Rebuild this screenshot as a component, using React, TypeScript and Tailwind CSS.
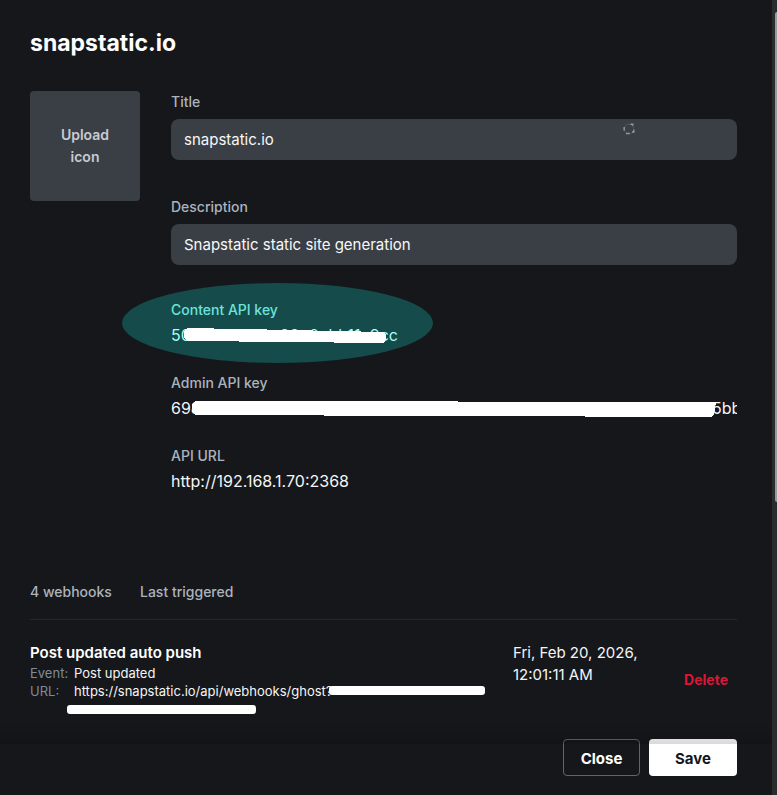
import { useState } from "react";

type FieldProps = { id: string; label: string; initial: string };

function TextField({ id, label, initial }: FieldProps) {
  const [value, setValue] = useState(initial);
  return (
    <div className="flex flex-col gap-1.5">
      <label htmlFor={id} className="text-sm leading-[22px] font-medium text-[#abb4be]">
        {label}
      </label>
      <input
        id={id}
        type="text"
        value={value}
        onChange={(e) => setValue(e.target.value)}
        className="h-[41px] w-full rounded-lg bg-[#3a3f46] px-[13px] text-[15px] text-[#f8f8f8] outline-none"
      />
    </div>
  );
}

function BusyMark() {
  return (
    <svg
      className="pointer-events-none absolute top-8 right-[102px] size-3"
      viewBox="0 0 12 12"
      fill="none"
      stroke="#92979d"
      strokeWidth="1.5"
      aria-hidden="true"
    >
      <circle cx="6" cy="6" r="4.8" stroke="#50565d" strokeWidth="1" />
      <path d="M7.5 1.2h2.3v1.6M10.8 6.8v2.2H9M3 10.6h3.8M1.2 4v3.5" />
    </svg>
  );
}

export default function App() {
  return (
    <div className="flex min-h-screen bg-[#16171b] font-['Inter','Liberation_Sans',sans-serif] text-[#f5f5f5]">
      <main className="flex min-h-screen min-w-0 flex-1 flex-col">
        <div className="flex flex-1 flex-col pt-[27px] pr-[35px] pl-[30px]">
          <h1 className="text-[23px] leading-8 font-bold text-white">snapstatic.io</h1>

          <section className="mt-8 flex items-start gap-[31px]">
            <button
              type="button"
              className="size-[110px] shrink-0 rounded bg-[#3a3f46] px-6 text-sm leading-[22px] font-semibold text-[#c8cbcf]"
            >
              Upload icon
            </button>

            <div className="min-w-0 flex-1">
              <div className="relative">
                <TextField id="title" label="Title" initial="snapstatic.io" />
                <BusyMark />
              </div>
              <div className="mt-9">
                <TextField id="description" label="Description" initial="Snapstatic static site generation" />
              </div>

              <dl className="mt-[34px] flex flex-col gap-[26px]">
                <div className="relative isolate">
                  <div className="absolute -top-4 -left-[49px] -z-10 h-20 w-[311px] rounded-[50%] bg-[#154b4a]" />
                  <dt className="text-sm leading-[22px] font-medium text-[#6ce3dc]">Content API key</dt>
                  <dd className="mt-[3px] flex h-[22px] w-[227px] justify-between text-base leading-[22px] text-[#a5fff4]">
                    <span>50</span>
                    <span>99e0ebb11e9cc</span>
                  </dd>
                  <svg
                    className="absolute top-[29px] left-3 h-4 w-[204px]"
                    viewBox="0 0 204 16"
                    fill="#fff"
                    shapeRendering="crispEdges"
                    aria-hidden="true"
                  >
                    <path d="M4 0H31V1H84V2H130V3H178V4H200L203 6V11L201 15H151V14H56V13H5L1 10V3Z" />
                  </svg>
                </div>

                <div className="relative">
                  <dt className="text-sm leading-[22px] font-medium text-[#abb4be]">Admin API key</dt>
                  <dd className="mt-[3px] flex h-[22px] justify-between overflow-hidden text-base leading-[22px]">
                    <span>698</span>
                    <span className="w-[25px] whitespace-nowrap">5bb</span>
                  </dd>
                  <svg
                    className="absolute top-[29px] right-[21px] left-5 h-4 w-[calc(100%-41px)]"
                    viewBox="0 0 525 16"
                    preserveAspectRatio="none"
                    fill="#fff"
                    shapeRendering="crispEdges"
                    aria-hidden="true"
                  >
                    <path d="M4 0H267V1H525L523 13L521 16H394V15H133V14H4L1 11V3Z" />
                  </svg>
                </div>

                <div>
                  <dt className="text-sm leading-[22px] font-medium text-[#abb4be]">API URL</dt>
                  <dd className="mt-[3px] text-base leading-[22px]">http://192.168.1.70:2368</dd>
                </div>
              </dl>
            </div>
          </section>

          <section className="mt-[89px]">
            <table className="w-full table-fixed text-left">
              <colgroup>
                <col className="w-[110px]" />
                <col />
                <col className="w-[150px]" />
                <col className="w-[74px]" />
              </colgroup>
              <thead>
                <tr className="h-[38px] border-b border-[#26282d] align-top text-sm leading-[22px] text-[#abb4be]">
                  <th scope="col" className="font-medium whitespace-nowrap">4 webhooks</th>
                  <th scope="col" colSpan={3} className="font-medium">Last triggered</th>
                </tr>
              </thead>
              <tbody>
                <tr className="align-top">
                  <td colSpan={2} className="pt-[22px]">
                    <div className="text-[15px] leading-[22px] font-semibold text-white">Post updated auto push</div>
                    <dl className="grid grid-cols-[44px_1fr] text-[13px] leading-[18px]">
                      <dt className="text-[#7c8b9a]">Event:</dt>
                      <dd>Post updated</dd>
                      <dt className="text-[#7c8b9a]">URL:</dt>
                      <dd className="flex items-center whitespace-nowrap">
                        https://snapstatic.io/api/webhooks/ghost?
                        <span className="-ml-1 h-[9px] w-[156px] shrink-0 rounded-[3px] bg-white" />
                      </dd>
                      <dd className="col-span-2 flex h-5 items-center pl-[37px]">
                        <span className="h-[9px] w-[189px] rounded-[3px] bg-white" />
                      </dd>
                    </dl>
                  </td>
                  <td className="pt-[22px] text-[15px] leading-[22px]">
                    Fri, Feb 20, 2026,
                    <br />
                    12:01:11 AM
                  </td>
                  <td className="pt-[47px] pr-[9px] text-right">
                    <button type="button" className="text-sm leading-[22px] font-bold text-[#dc1636]">
                      Delete
                    </button>
                  </td>
                </tr>
              </tbody>
            </table>
          </section>
        </div>

        <footer className="relative flex justify-end gap-[9px] pt-[18px] pr-[35px] pb-[19px]">
          <button
            type="button"
            className="h-[37px] w-[77px] rounded border border-[#60646b] pt-0.5 text-[15px] leading-[22px] font-bold text-white"
          >
            Close
          </button>
          <button
            type="button"
            className="h-[37px] w-[88px] rounded bg-white pt-0.5 text-[15px] leading-[22px] font-bold text-[#16171b]"
          >
            Save
          </button>
          <div className="pointer-events-none absolute inset-x-0 top-0 h-[23px] bg-linear-to-b from-transparent to-black/15" />
        </footer>
      </main>

      <div className="w-[5px] shrink-0 bg-[#2b2c2d] pt-3 pl-[3px]">
        <div className="h-[490px] rounded-tl-xs rounded-bl-xs bg-[#999]" />
      </div>
    </div>
  );
}
